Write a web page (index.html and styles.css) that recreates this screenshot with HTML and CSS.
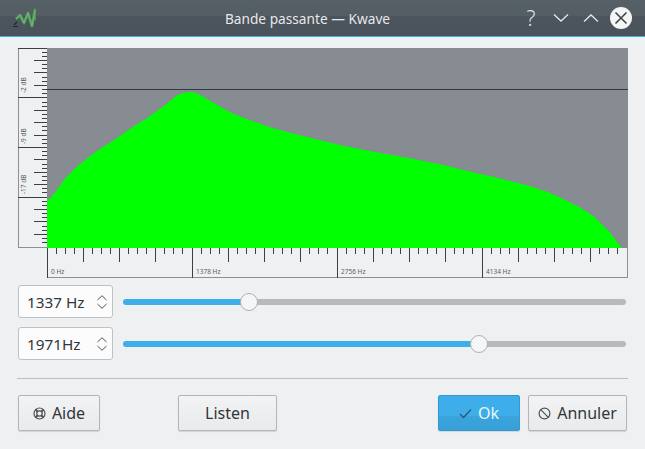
FILE: index.html
```html
<!DOCTYPE html>
<html>
	<head>
		<title>Bande passante — Kwave</title>
		<link rel="stylesheet" href="styles.css">
	</head>
	<body>
		<div class="titlebar">
			<svg class="logo" width="24" height="20" viewBox="0 0 24 20">
				<path d="M1 18.500h5M2 17l3-3" stroke="#23282c" stroke-width="1.200" fill="none"/>
				<path d="M4 11l4-4 4 8 4-10 4 13 3-16 1 10" stroke="#4f9c58" stroke-width="2.800" fill="none" stroke-linejoin="round"/>
				<path d="M4 11l4-4 4 8 4-10 4 13 3-16" stroke="#7dbd80" stroke-width="0.800" fill="none" stroke-linejoin="round"/>
			</svg>
			<div class="title">Bande passante — Kwave</div>
			<div class="winbtns">
				<span class="helpbtn">?</span>
				<svg width="16" height="10" viewBox="0 0 16 10"><path d="M1 1.500L8 8l7-6.500" class="winicon"/></svg>
				<svg width="16" height="10" viewBox="0 0 16 10"><path d="M1 8.500L8 2l7 6.500" class="winicon"/></svg>
				<svg class="closebtn" width="22" height="22" viewBox="0 0 22 22"><circle cx="11" cy="11" r="11" fill="#f4f5f5"/><path d="M5.500 5.500l11 11M16.500 5.500l-11 11" stroke="#3c444c" stroke-width="1.600"/></svg>
			</div>
		</div>
		<div class="content">
			<div class="graph">
				<svg class="leftruler" width="29" height="200" viewBox="0 0 29 200">
					<path d="M0.500 0V200M0 199.500H29" stroke="#8c8f93" fill="none"/>
					<path d="M0 0.500H29M0 49.500H29M0 99.500H29M0 149.500H29" stroke="#3b4045" fill="none"/>
					<path d="M16 12.500H29M16 24.500H29M16 37.500H29M16 62.500H29M16 74.500H29M16 87.500H29M16 111.500H29M16 124.500H29M16 136.500H29M16 161.500H29M16 173.500H29M16 186.500H29" stroke="#3b4045" fill="none"/>
					<path d="M24 4.500H29M24 8.500H29M24 16.500H29M24 20.500H29M24 29.500H29M24 33.500H29M24 41.500H29M24 45.500H29M24 54.500H29M24 58.500H29M24 66.500H29M24 70.500H29M24 78.500H29M24 82.500H29M24 91.500H29M24 95.500H29M24 103.500H29M24 107.500H29M24 116.500H29M24 120.500H29M24 128.500H29M24 132.500H29M24 140.500H29M24 144.500H29M24 153.500H29M24 157.500H29M24 165.500H29M24 169.500H29M24 178.500H29M24 182.500H29M24 190.500H29M24 194.500H29" stroke="#3b4045" fill="none"/>
					<text class="rulertext" transform="translate(8 45) rotate(-90)">-2 dB</text>
					<text class="rulertext" transform="translate(8 96) rotate(-90)">-9 dB</text>
					<text class="rulertext" transform="translate(8 146) rotate(-90)">-17 dB</text>
				</svg>
				<svg class="plot" width="581" height="200" viewBox="0 0 581 200">
					<rect width="581" height="200" fill="#878b92"/>
					<path shape-rendering="crispEdges" d="M0 200V151L3 151L10 142L20 128L33 116L50 103L67 92L83 81L100 70L117 58L123 53L128 49L133 46L137 44.700L143 44L147 44.500L150 45.300L160 51L173 58.700L187 66L200 71L226 80.300L260 89L293 97L326 103.700L360 109.700L393 116.300L416 122L450 129.700L483 138L500 143.700L516 151L533 159.300L546 168L556 178L565 187L571 195.300L576 200Z" fill="#00ff00"/>
					<path d="M0 41.500H581" stroke="#33383d" fill="none"/>
				</svg>
				<svg class="bottomruler" width="581" height="30" viewBox="0 0 581 30">
					<path d="M0 29.500H581M580.500 0V30" stroke="#8c8f93" fill="none"/>
					<path d="M0.500 0V30M145.500 0V30M290.500 0V30M435.500 0V30" stroke="#3b4045" fill="none"/>
					<path d="M36.500 0V14M72.500 0V14M108.500 0V14M181.500 0V14M217.500 0V14M253.500 0V14M326.500 0V14M362.500 0V14M398.500 0V14M471.500 0V14M507.500 0V14M543.500 0V14" stroke="#3b4045" fill="none"/>
					<path d="M9.500 0V6M18.500 0V6M27.500 0V6M45.500 0V6M54.500 0V6M63.500 0V6M81.500 0V6M90.500 0V6M99.500 0V6M117.500 0V6M126.500 0V6M135.500 0V6M154.500 0V6M163.500 0V6M172.500 0V6M190.500 0V6M199.500 0V6M208.500 0V6M226.500 0V6M235.500 0V6M244.500 0V6M262.500 0V6M271.500 0V6M280.500 0V6M299.500 0V6M308.500 0V6M317.500 0V6M335.500 0V6M344.500 0V6M353.500 0V6M371.500 0V6M380.500 0V6M389.500 0V6M407.500 0V6M416.500 0V6M425.500 0V6M444.500 0V6M453.500 0V6M462.500 0V6M480.500 0V6M489.500 0V6M498.500 0V6M516.500 0V6M525.500 0V6M534.500 0V6M552.500 0V6M561.500 0V6M570.500 0V6" stroke="#3b4045" fill="none"/>
					<text class="rulertext" x="4" y="26">0 Hz</text>
					<text class="rulertext" x="149" y="26">1378 Hz</text>
					<text class="rulertext" x="294" y="26">2756 Hz</text>
					<text class="rulertext" x="439" y="26">4134 Hz</text>
				</svg>
			</div>
			<div class="sliders">
				<div class="sliderrow">
					<div class="spinbox">
						<span>1337 Hz</span>
						<svg class="spinarrows" width="10" height="14" viewBox="0 0 10 14"><path d="M0.500 5L5 0.700L9.500 5M0.500 9L5 13.300L9.500 9" stroke="#4d5257" fill="none"/></svg>
					</div>
					<div class="slider">
						<div class="fill fill1"></div>
						<div class="handle"></div>
						<div class="rest"></div>
					</div>
				</div>
				<div class="sliderrow">
					<div class="spinbox">
						<span>1971Hz</span>
						<svg class="spinarrows" width="10" height="14" viewBox="0 0 10 14"><path d="M0.500 5L5 0.700L9.500 5M0.500 9L5 13.300L9.500 9" stroke="#4d5257" fill="none"/></svg>
					</div>
					<div class="slider">
						<div class="fill fill2"></div>
						<div class="handle"></div>
						<div class="rest"></div>
					</div>
				</div>
			</div>
			<div class="separator"></div>
			<div class="buttons">
				<button class="btn btn-aide">
					<svg width="13" height="13" viewBox="0 0 13 13"><circle cx="6.500" cy="6.500" r="5.500" fill="none" stroke="#4d5257" stroke-width="1.200"/><circle cx="6.500" cy="6.500" r="2.700" fill="none" stroke="#4d5257" stroke-width="1.200"/><path d="M2.500 2.500L4.500 4.500M10.500 2.500L8.500 4.500M2.500 10.500L4.500 8.500M10.500 10.500L8.500 8.500" stroke="#4d5257" stroke-width="2"/></svg>
					Aide
				</button>
				<button class="btn btn-listen">Listen</button>
				<div class="spacer"></div>
				<button class="btn btn-ok">
					<svg width="13" height="11" viewBox="0 0 13 11"><path d="M1 6l3.500 3.500L12 1.500" stroke="#31566e" stroke-width="1.300" fill="none"/></svg>
					Ok
				</button>
				<button class="btn btn-annuler">
					<svg width="13" height="13" viewBox="0 0 13 13"><circle cx="6.500" cy="6.500" r="5.400" fill="none" stroke="#4d5257" stroke-width="1.200"/><path d="M2.700 2.700L10.300 10.300" stroke="#4d5257" stroke-width="1.200"/></svg>
					Annuler
				</button>
			</div>
		</div>
	</body>
</html>
```

FILE: styles.css
```css
html, body {
	margin: 0;
	padding: 0;
}
body {
	width: 645px;
	height: 449px;
	overflow: hidden;
	background: #eff0f1;
	color: #31363b;
	font-family: "Noto Sans", sans-serif;
	font-size: 15.300px;
}
svg {
	display: block;
}

.titlebar {
	display: flex;
	align-items: center;
	height: 36px;
	border-bottom: 1px solid #3daee9;
	background: linear-gradient(#566067 0, #535d63 16px, #4c545e 16px, #4a525b 36px);
	color: #e6e8e9;
}
.logo {
	margin-left: 12px;
	flex: none;
}
.title {
	flex: 1;
	text-align: center;
	font-size: 13.700px;
	padding-left: 55px;
}
.winbtns {
	display: flex;
	align-items: center;
	gap: 14px;
	margin-right: 13px;
}
.helpbtn {
	font-size: 21px;
	font-weight: 300;
	width: 14px;
	text-align: center;
	margin-right: 1px;
	color: #dfe2e3;
}
.winicon {
	stroke: #e6e8e9;
	stroke-width: 1.300;
	fill: none;
}
.closebtn {
	margin-left: -3px;
}

.content {
	padding: 11px 17px 0 18px;
}
.graph {
	display: grid;
	grid-template-columns: 29px 581px;
	grid-template-rows: 200px 30px;
}
.bottomruler {
	grid-column: 2;
}
.rulertext {
	font-family: "Noto Sans", sans-serif;
	font-size: 6.500px;
	fill: #5a5e62;
}

.sliders {
	display: flex;
	flex-direction: column;
	gap: 9px;
	margin-top: 7px;
}
.sliderrow {
	display: flex;
	align-items: center;
	gap: 10px;
}
.spinbox {
	display: flex;
	align-items: center;
	justify-content: space-between;
	box-sizing: border-box;
	width: 95px;
	height: 33px;
	padding: 0 5px 0 8px;
	background: #fcfcfc;
	border: 1px solid #bfc2c4;
	border-radius: 3px;
}
.slider {
	flex: 1;
	display: flex;
	align-items: center;
	margin-right: 2px;
}
.fill {
	height: 6px;
	background: #3daee9;
	border-radius: 3px 0 0 3px;
	margin-right: -1px;
}
.fill1 {
	width: 118px;
}
.fill2 {
	width: 348px;
}
.rest {
	flex: 1;
	height: 6px;
	background: #b7b9bb;
	border-radius: 0 3px 3px 0;
	margin-left: -1px;
}
.handle {
	flex: none;
	box-sizing: border-box;
	width: 18px;
	height: 18px;
	background: #f5f6f6;
	border: 1px solid #aeb1b4;
	border-radius: 50%;
	position: relative;
}

.separator {
	height: 1px;
	margin: 18px 0 16px -1px;
	background: #bcbec0;
}
.buttons {
	display: flex;
	gap: 8px;
	margin-right: 1px;
}
.spacer {
	flex: 1;
}
.btn {
	display: flex;
	align-items: center;
	justify-content: center;
	gap: 6px;
	box-sizing: border-box;
	height: 36px;
	padding: 0;
	font-family: inherit;
	font-size: 16px;
	color: #31363b;
	background: linear-gradient(#f2f3f4, #e9eaeb);
	border: 1px solid #b3b6b9;
	border-radius: 2px;
	box-shadow: 0 1px 1px rgba(0, 0, 0, 0.12);
}
.btn-aide {
	width: 82px;
	margin-right: 70px;
}
.btn-listen {
	width: 99px;
}
.btn-ok {
	width: 82px;
	color: #eaf6fc;
	background: linear-gradient(#3daee9 0, #3daee9 20px, #3aa4dd 20px, #379fd7 36px);
	border-color: #3498cf;
}
.btn-annuler {
	width: 99px;
}
```
